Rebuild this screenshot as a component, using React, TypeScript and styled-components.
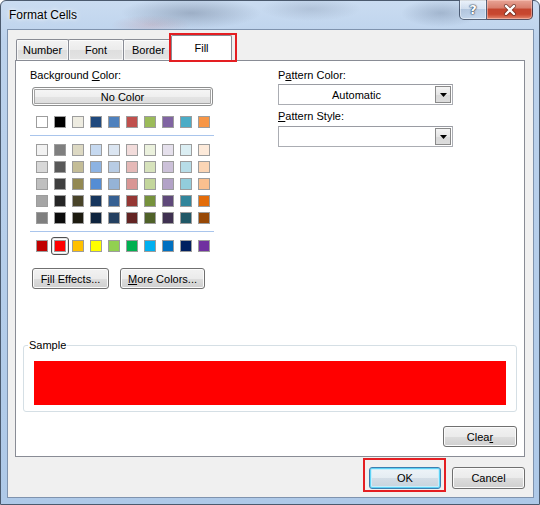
import React from 'react';
import styled, { createGlobalStyle, css } from 'styled-components';

const GlobalStyle = createGlobalStyle`
  html, body {
    margin: 0;
    padding: 0;
    background: #ffffff;
  }
  body {
    font-family: "Liberation Sans", Arial, sans-serif;
    font-size: 11px;
    color: #000;
  }
`;

const themeColors = ['#FFFFFF', '#000000', '#EEECE1', '#1F497D', '#4F81BD', '#C0504D', '#9BBB59', '#8064A2', '#4BACC6', '#F79646'];

// one column per theme colour, lightest first
const tints = [
  ['#F2F2F2', '#D8D8D8', '#BFBFBF', '#A5A5A5', '#7F7F7F'],
  ['#7F7F7F', '#595959', '#3F3F3F', '#262626', '#0C0C0C'],
  ['#DDD9C3', '#C4BD97', '#938953', '#494429', '#1D1B10'],
  ['#C6D9F0', '#8DB3E2', '#548DD4', '#17365D', '#0F243E'],
  ['#DBE5F1', '#B8CCE4', '#95B3D7', '#366092', '#244061'],
  ['#F2DCDB', '#E5B9B7', '#D99694', '#953734', '#632423'],
  ['#EBF1DD', '#D7E3BC', '#C3D69B', '#76923C', '#4F6128'],
  ['#E5E0EC', '#CCC1D9', '#B2A2C7', '#5F497A', '#3F3151'],
  ['#DBEEF3', '#B7DDE8', '#92CDDC', '#31859B', '#205867'],
  ['#FDEADA', '#FBD5B5', '#FAC08F', '#E36C09', '#974806'],
];

const standardColors = ['#C00000', '#FF0000', '#FFC000', '#FFFF00', '#92D050', '#00B050', '#00B0F0', '#0070C0', '#002060', '#7030A0'];

const Window = styled.div`
  position: relative;
  width: 540px;
  height: 505px;
  box-sizing: border-box;
  display: flex;
  flex-direction: column;
  padding: 0 5px 6px 6px;
  border: 1px solid #4b5a6e;
  border-radius: 6px 6px 0 0;
  background:
    radial-gradient(ellipse 70px 16px at 190px 12px, rgba(80, 95, 120, 0.35), transparent),
    radial-gradient(ellipse 50px 12px at 310px 8px, rgba(110, 125, 150, 0.25), transparent),
    radial-gradient(ellipse 40px 14px at 440px 12px, rgba(80, 100, 130, 0.3), transparent),
    radial-gradient(ellipse 40px 10px at 150px 24px, rgba(190, 90, 90, 0.18), transparent),
    linear-gradient(180deg, #cadcf1 0%, #bcd2ec 8%, #aec9e8 100%);
`;

const TitleBar = styled.div`
  height: 28px;
  display: flex;
  justify-content: space-between;
  align-items: flex-start;
  padding-left: 2px;
  padding-right: 1px;
`;

const Title = styled.div`
  font-size: 12px;
  line-height: 12px;
  margin-top: 8px;
  color: #000;
  text-shadow: 0 0 6px rgba(255, 255, 255, 0.9), 0 0 3px rgba(255, 255, 255, 0.9);
`;

const Captions = styled.div`
  display: flex;
  margin-top: -1px;
`;

const CaptionButton = styled.div<{ $close?: boolean }>`
  height: 20px;
  box-sizing: border-box;
  display: flex;
  align-items: center;
  justify-content: center;
  border: 1px solid rgba(40, 55, 80, 0.75);
  border-top: none;
  ${({ $close }) =>
    $close
      ? css`
          width: 46px;
          border-left: none;
          border-radius: 0 0 5px 0;
          background: linear-gradient(180deg, #e8a496 0%, #d9806f 40%, #c4452f 50%, #c8472f 75%, #e2866d 100%);
          box-shadow: inset 0 0 0 1px rgba(255, 210, 200, 0.5);
        `
      : css`
          width: 28px;
          border-radius: 0 0 0 5px;
          background: linear-gradient(180deg, rgba(255, 255, 255, 0.6) 0%, rgba(235, 242, 250, 0.45) 45%, rgba(170, 190, 215, 0.45) 50%, rgba(200, 218, 238, 0.6) 100%);
          box-shadow: inset 0 0 0 1px rgba(255, 255, 255, 0.45);
        `}
`;

const HelpGlyph = styled.span`
  font-family: "DejaVu Sans", sans-serif;
  font-weight: bold;
  font-size: 13px;
  line-height: 13px;
  color: #fff;
  text-shadow: 0 0 1px #2b3d55, 0 0 1px #2b3d55, 0 0 2px #2b3d55;
`;

const Client = styled.div`
  flex: 1;
  display: flex;
  flex-direction: column;
  padding: 5px 8px 8px 7px;
  background: #f0f0f0;
  border: 1px solid #7f93ae;
`;

const TabStrip = styled.div`
  height: 25px;
  display: flex;
  align-items: flex-end;
  padding-left: 1px;
`;

const redBox = css`
  content: '';
  position: absolute;
  border: 2px solid #e41e22;
  pointer-events: none;
`;

const Tab = styled.div<{ $w: number; $active?: boolean }>`
  position: relative;
  width: ${({ $w }) => $w}px;
  height: 21px;
  box-sizing: border-box;
  display: flex;
  align-items: center;
  justify-content: center;
  margin-right: -1px;
  border: 1px solid #898c95;
  border-bottom: none;
  border-radius: 2px 2px 0 0;
  background: linear-gradient(180deg, #f3f3f3 0%, #ebebeb 50%, #dedede 50%, #e4e4e4 100%);
  box-shadow: inset 0 0 0 1px rgba(255, 255, 255, 0.7);
  ${({ $active }) =>
    $active &&
    css`
      z-index: 2;
      height: 26px;
      margin: 0 -2px -1px -2px;
      background: #ffffff;
      box-shadow: none;
      padding-bottom: 2px;
      &::after {
        ${redBox}
        left: -3px;
        right: -6px;
        top: -3px;
        bottom: -1px;
      }
    `}
`;

const Pane = styled.div`
  position: relative;
  flex: 1;
  display: flex;
  flex-direction: column;
  padding: 7px 7px 9px 7px;
  background: #ffffff;
  border: 1px solid #898c95;
`;

const TopSection = styled.div`
  display: grid;
  grid-template-columns: 185px 175px;
  column-gap: 63px;
  padding-left: 7px;
`;

const Column = styled.div`
  display: flex;
  flex-direction: column;
  align-items: flex-start;
`;

const Label = styled.div<{ $gap?: number }>`
  line-height: 14px;
  margin-top: ${({ $gap }) => $gap ?? 0}px;
`;

const Key = styled.span`
  text-decoration: underline;
  text-underline-offset: 1px;
`;

const NoColorButton = styled.div`
  width: 181px;
  height: 19px;
  box-sizing: border-box;
  margin: 5px 0 0 2px;
  display: flex;
  align-items: center;
  justify-content: center;
  border: 1px solid #8e8f8f;
  border-radius: 3px;
  background: linear-gradient(180deg, #f7f7f7 0%, #efefef 50%, #e4e4e4 51%, #dcdcdc 100%);
  box-shadow: inset 0 0 0 1px #ffffff, inset 0 0 0 2px #a4a4a4;
`;

const SwatchRow = styled.div<{ $top: number }>`
  display: grid;
  grid-template-columns: repeat(10, 12px);
  column-gap: 6px;
  row-gap: 5px;
  margin-top: ${({ $top }) => $top}px;
  padding-left: 6px;
`;

const Swatch = styled.span<{ $c: string; $selected?: boolean }>`
  position: relative;
  width: 12px;
  height: 12px;
  box-sizing: border-box;
  border: 1px solid #9d9d9d;
  background: ${({ $c }) => $c};
  ${({ $selected }) =>
    $selected &&
    css`
      &::after {
        content: '';
        position: absolute;
        inset: -4px;
        border: 1px solid #4f4f4f;
        border-radius: 3px;
        box-shadow: inset 0 0 0 1px #e6e6e6;
      }
    `}
`;

const Divider = styled.div<{ $top: number }>`
  width: 184px;
  height: 1px;
  margin-top: ${({ $top }) => $top}px;
  background: #a9c5ec;
`;

const ButtonRow = styled.div`
  display: flex;
  gap: 11px;
  margin: 16px 0 0 2px;
`;

const Button = styled.button<{ $w: number; $h?: number; $default?: boolean; $marked?: boolean }>`
  position: relative;
  width: ${({ $w }) => $w}px;
  height: ${({ $h }) => $h ?? 21}px;
  box-sizing: border-box;
  padding: 0;
  font-family: "Liberation Sans", Arial, sans-serif;
  font-size: 11px;
  color: #000;
  border: 1px solid #707070;
  border-radius: 3px;
  background: linear-gradient(180deg, #f2f2f2 0%, #ebebeb 50%, #dddddd 51%, #cfcfcf 100%);
  box-shadow: inset 0 0 0 1px #fbfbfb;
  ${({ $default }) =>
    $default &&
    css`
      border-color: #3c7fb1;
      background: linear-gradient(180deg, #eef4f8 0%, #e4ecf2 50%, #d3dde6 51%, #c7d3dc 100%);
      box-shadow: inset 0 0 0 1px #5fd2f5, inset 0 0 0 2px #c8eefb;
    `}
  ${({ $marked }) =>
    $marked &&
    css`
      &::after {
        ${redBox}
        left: -7px;
        right: -6px;
        top: -10px;
        bottom: -4px;
      }
    `}
`;

const Select = styled.div<{ $top: number }>`
  width: 175px;
  height: 21px;
  box-sizing: border-box;
  margin-top: ${({ $top }) => $top}px;
  display: flex;
  align-items: stretch;
  border: 1px solid #abadb3;
  border-top-color: #9a9ca3;
  background: #ffffff;
`;

const SelectValue = styled.div`
  flex: 1;
  display: flex;
  align-items: center;
  justify-content: center;
`;

const SelectArrow = styled.div`
  width: 16px;
  margin: 1px;
  box-sizing: border-box;
  display: flex;
  align-items: center;
  justify-content: center;
  border: 1px solid #8a8a8a;
  background: linear-gradient(180deg, #f4f4f4 0%, #e6e6e6 50%, #d9d9d9 51%, #dcdcdc 100%);
`;

const SampleGroup = styled.fieldset`
  margin: auto 0 0 0;
  padding: 9px 10px 6px 10px;
  border: 1px solid #d5dfe5;
  border-radius: 3px;
  min-width: 0;
`;

const SampleLegend = styled.legend`
  margin-left: -6px;
  padding: 0 1px;
  line-height: 13px;
`;

const SampleFill = styled.div`
  height: 44px;
  background: #ff0000;
`;

const ClearRow = styled.div`
  display: flex;
  justify-content: flex-end;
  margin-top: 14px;
`;

const Footer = styled.div`
  display: flex;
  justify-content: flex-end;
  gap: 11px;
  margin-top: 10px;
`;

const Arrow = () => (
  <svg width="7" height="4" viewBox="0 0 7 4">
    <path d="M0 0h7L3.5 4z" fill="#000" />
  </svg>
);

const CloseIcon = () => (
  <svg width="14" height="12" viewBox="0 0 14 12">
    <path d="M3 2l8 8M11 2l-8 8" stroke="#3a1a14" strokeWidth="4" strokeLinecap="round" opacity="0.55" />
    <path d="M3 2l8 8M11 2l-8 8" stroke="#ffffff" strokeWidth="2.4" strokeLinecap="round" />
  </svg>
);

export default function App() {
  return (
    <>
      <GlobalStyle />
      <Window>
        <TitleBar>
          <Title>Format Cells</Title>
          <Captions>
            <CaptionButton>
              <HelpGlyph>?</HelpGlyph>
            </CaptionButton>
            <CaptionButton $close>
              <CloseIcon />
            </CaptionButton>
          </Captions>
        </TitleBar>

        <Client>
          <TabStrip>
            <Tab $w={53}>Number</Tab>
            <Tab $w={56}>Font</Tab>
            <Tab $w={51}>Border</Tab>
            <Tab $w={61} $active>
              Fill
            </Tab>
          </TabStrip>

          <Pane>
            <TopSection>
              <Column>
                <Label>
                  Background <Key>C</Key>olor:
                </Label>
                <NoColorButton>No Color</NoColorButton>
                <SwatchRow $top={10}>
                  {themeColors.map((c) => (
                    <Swatch key={c} $c={c} />
                  ))}
                </SwatchRow>
                <Divider $top={7} />
                <SwatchRow $top={8}>
                  {[0, 1, 2, 3, 4].map((row) =>
                    tints.map((col, i) => <Swatch key={`${row}-${i}`} $c={col[row]} />)
                  )}
                </SwatchRow>
                <Divider $top={7} />
                <SwatchRow $top={8}>
                  {standardColors.map((c, i) => (
                    <Swatch key={c} $c={c} $selected={i === 1} />
                  ))}
                </SwatchRow>
                <ButtonRow>
                  <Button $w={77}>
                    F<Key>i</Key>ll Effects...
                  </Button>
                  <Button $w={85}>
                    <Key>M</Key>ore Colors...
                  </Button>
                </ButtonRow>
              </Column>

              <Column>
                <Label>
                  P<Key>a</Key>ttern Color:
                </Label>
                <Select $top={2}>
                  <SelectValue>Automatic</SelectValue>
                  <SelectArrow>
                    <Arrow />
                  </SelectArrow>
                </Select>
                <Label $gap={4}>
                  <Key>P</Key>attern Style:
                </Label>
                <Select $top={3}>
                  <SelectValue />
                  <SelectArrow>
                    <Arrow />
                  </SelectArrow>
                </Select>
              </Column>
            </TopSection>

            <SampleGroup>
              <SampleLegend>Sample</SampleLegend>
              <SampleFill />
            </SampleGroup>

            <ClearRow>
              <Button $w={74}>
                Clea<Key>r</Key>
              </Button>
            </ClearRow>
          </Pane>

          <Footer>
            <Button $w={72} $h={22} $default $marked>
              OK
            </Button>
            <Button $w={73} $h={22}>
              Cancel
            </Button>
          </Footer>
        </Client>
      </Window>
    </>
  );
}
